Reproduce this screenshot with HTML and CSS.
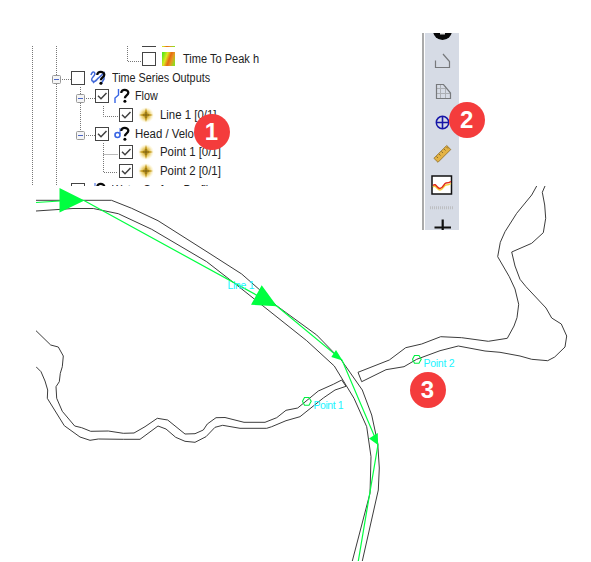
FILE: index.html
```html
<!DOCTYPE html>
<html lang="en">
<head>
<meta charset="utf-8">
<title>Time series outputs</title>
<link rel="stylesheet" href="styles.css">
</head>
<body>
<svg width="0" height="0" class="defs">
  <defs>
    <radialGradient id="glow"><stop offset="0" stop-color="#c49c20"/><stop offset=".55" stop-color="#ecd278" stop-opacity=".9"/><stop offset="1" stop-color="#fff3bf" stop-opacity="0"/></radialGradient>
    <linearGradient id="heat" x1="0" y1=".3" x2="1" y2=".7"><stop offset="0" stop-color="#5ee51b"/><stop offset=".3" stop-color="#dce820"/><stop offset=".55" stop-color="#e56a13"/><stop offset=".75" stop-color="#e79824"/><stop offset="1" stop-color="#91dc20"/></linearGradient>
    <symbol id="star" viewBox="0 0 16 16"><circle cx="8" cy="8" r="8" fill="url(#glow)"/><path d="M8 1 9.600 6.400 15 8 9.600 9.600 8 15 6.400 9.600 1 8 6.400 6.400Z" fill="#c39a20"/><path d="M8 5v6M5 8h6" stroke="#6b5410" stroke-width=".8"/></symbol>
    <symbol id="query" viewBox="0 0 16 16"><path d="M7.3 5C7 .9 14.300.9 14.300 4.800c0 2.600-3.400 2.600-3.400 5.400" fill="none" stroke="#080808" stroke-width="2.300"/><circle cx="10.900" cy="13.300" r="1.500"/></symbol>
    <symbol id="tick" viewBox="0 0 14 14"><path d="M3 6.700 6 9.700 11.500 4" fill="none" stroke="#404040" stroke-width="1.500"/></symbol>
  </defs>
</svg>
<main class="page">
  <section class="tree">
    <svg class="guides" viewBox="32 46 228 140" width="228" height="140">
      <path class="dots" d="M32.500 46V186M56.500 46V186M127.500 46V61.500H141M62 79.500H71M80.500 87V133M86 98.500H95M103.500 106V116.500H118M86 135.500H95M103.500 143V172.500H118M103.500 154.500H118"/>
      <g class="expander"><rect x="52.500" y="75.500" width="8" height="8" rx="1"/><rect x="76.500" y="94.500" width="8" height="8" rx="1"/><rect x="76.500" y="131.500" width="8" height="8" rx="1"/></g>
      <path d="M54 79.500h5M78 98.500h5M78 135.500h5" stroke="#4b66c7"/>
    </svg>
    <div class="rows">
      <div class="row d4"><i class="box"></i><svg class="ico"><rect x="1" y="1" width="13" height="14" fill="url(#heat)"/></svg></div>
      <div class="row d4"><i class="box"></i><svg class="ico"><rect x="1" y="1" width="13" height="14" fill="url(#heat)"/></svg><span class="label wide">Time To Peak h</span></div>
      <div class="row d1"><i class="box"></i><svg class="ico"><path d="M1 5C3-1 7 3 3 7S5 14 8 8M3 13 14 3v6l-3 5" fill="none" stroke="#4068d8" stroke-width="1.500"/><use href="#query" width="16" height="16"/></svg><span class="label">Time Series Outputs</span></div>
      <div class="row d2"><i class="box"><svg><use href="#tick"/></svg></i><svg class="ico"><path d="M1 15V10L4.500 7V1" fill="none" stroke="#3865e4" stroke-width="1.400"/><use href="#query" width="16" height="16"/></svg><span class="label">Flow</span></div>
      <div class="row d3"><i class="box"><svg><use href="#tick"/></svg></i><svg class="ico"><use href="#star" width="16" height="16"/></svg><span class="label count">Line 1 [0/1]</span></div>
      <div class="row d2"><i class="box"><svg><use href="#tick"/></svg></i><svg class="ico"><circle cx="3.500" cy="9" r="2.500" fill="none" stroke="#3865e4" stroke-width="1.600"/><path d="M6 2v6" stroke="#3865e4"/><use href="#query" width="16" height="16"/></svg><span class="label count">Head / Velo</span></div>
      <div class="row d3"><i class="box"><svg><use href="#tick"/></svg></i><svg class="ico"><use href="#star" width="16" height="16"/></svg><span class="label count">Point 1 [0/1]</span></div>
      <div class="row d3"><i class="box"><svg><use href="#tick"/></svg></i><svg class="ico"><use href="#star" width="16" height="16"/></svg><span class="label count">Point 2 [0/1]</span></div>
      <div class="row d1"><i class="box"></i><svg class="ico"><path d="M5 1v12" stroke="#3865e4"/><use href="#query" width="16" height="16"/></svg><span class="label">Water Surface Profiles</span></div>
    </div>
    <b class="badge one">1</b>
  </section>

  <aside class="toolbar">
    <svg viewBox="422 33 37 197" width="37" height="197" fill="none">
      <circle cx="442.500" cy="30.500" r="9.500" fill="#090909"/><path d="M440 33.500h5" stroke="#ddd" stroke-width="2"/>
      <path d="M435.500 60.500V67.500H449.500V61.500L443 54" stroke="#77797c" stroke-width="1.200"/>
      <path d="M440.500 84V98M445.500 86V98M436 88.500H447M436 93.500H450" stroke="#acafb4"/>
      <path d="M436.500 84.500H443.500L450.500 93V98.500H436.500Z" stroke="#77797c" stroke-width="1.200"/>
      <circle cx="442.500" cy="122.500" r="6.200" stroke="#1717a8" stroke-width="1.500"/><path d="M442.500 116V129M436 122.500H449" stroke="#1717a8" stroke-width="1.600"/>
      <path d="M446.700 145.500 450.800 149.500 438 162.300 433.900 158.300Z" fill="#e4b344" stroke="#8c6b25" stroke-width=".8"/><path d="M436.500 156.500l1.500 1.500M439 154l1.500 1.500M441.500 151.500l1.500 1.500M444 149l1.500 1.500M446.500 147l1.500 1.500" stroke="#65501f" stroke-width=".7"/>
      <rect x="432" y="176" width="19.500" height="18" fill="#fff" stroke="#111" stroke-width="1.500"/>
      <path d="M433 187C436 184 437 190 440 190S444 185 446 185 449 185 451 183.500" stroke="#f3d33a" stroke-width="1.500"/>
      <path d="M433 185.500C436 182.500 437 188.500 440 188.500S444 183 446 183 449 183 451 181.500" stroke="#e12a18" stroke-width="1.500"/>
      <path d="M430 207.700H454" stroke="#bdbfc2" stroke-width="3" stroke-dasharray="1 1"/>
      <path d="M442.700 219.500V230M434.500 227.500H451" stroke="#111" stroke-width="2.200"/>
    </svg>
    <b class="badge two">2</b>
  </aside>

  <section class="map">
    <svg viewBox="36 186 555 375" width="555" height="375">
      <g class="bank">
        <path d="M36 200.300H111.500L131.700 208.300 158 220.700 210 253.700 241.700 274 261 291 277 306 316.700 335 342 361 362.300 390 371.700 415 377.700 443 379.300 468 378.300 490 362.300 561"/>
        <path d="M36 211 73 208.500H93.300L118.300 213.700 151.700 229.300 206.700 261.700 236.700 285 306.700 340.700 334.300 366 354 398.300 366.700 426.700 371 456.700 370 493.300 352.300 561"/>
        <path d="M36 330.700 50.700 345 58.300 347 63.300 356 62.300 366.700 60.300 373.300 59.300 381.700 56 386.700 56.700 398.300 62.300 411.300 74.700 426 81.700 427.700 90.700 431.300 108.300 431 123.300 433.300 134 433 145 426.700 157.300 418.300 167.700 420 185 434 195 433.700 203.300 430 207.300 424 216 417.700 225 417.500 244 422.300 265 422.300 276.700 417.700 286 410.300 297.700 408 318.300 391 333.300 384.300 341.700 380 346 386.300 335 390 323.300 398 300 416.700 286 420.700 271.700 426.700 266.700 428.300H240L222.700 425.300 215 427.300 206 436.700 195 442.300 185 441.300 175.700 437.300 166 429 158 426 140 439.300 123.300 439.300 98.300 439 90 440.300 80 437 64.300 425.700 47.300 398.300 47.700 390 45 381 41 371.700 36 366.700"/>
        <path d="M536.700 186 531.700 195 516.700 213.300 505 231.700 500.300 242.300 497.700 256.700 509.300 276.700 515 289 518.700 304.300 517 317.700 514 326 507.300 338.300 488.300 341.300 461.700 337.700 440.700 336.700 421.700 344 405.700 347.700 389.300 360 358 372.300 361.700 381.700 386 369.700 404 366.700 416.700 359.300 440 350.700 458.300 346 485 351 500 352.300 520 356 531.700 359.300 547.700 360.700 554.700 357 565 347 566.700 336 561.300 324 551.700 318 546 308 526 286.700 520 279.300 515 266 511.700 252 531.700 243.300 543.300 232.700 545.700 218.300 544.700 205 542.300 192.300 545 186"/>
      </g>
      <path class="flow" d="M36 202.500 60 201M84 200.500 277 306.300 342 360 378 444.500 358.300 561"/>
      <path class="arrows" d="M59.500 188V212.500L84.500 200.500ZM261.700 285.300 251 304.700 277 306.300ZM336 350 331.300 357 342.500 360.500ZM377.800 433 369 438.500 378 445Z"/>
      <path class="node" d="M302.500 401.300 304.500 397.500H309L311.200 401.300 309 405.300H304.500ZM412.500 359.300 414.500 355.500H419L421.200 359.300 419 363.300H414.500Z"/>
      <g class="names"><text x="227.500" y="289" textLength="27">Line 1</text><text x="313.500" y="409" textLength="30">Point 1</text><text x="423.500" y="367" textLength="31">Point 2</text></g>
    </svg>
    <b class="badge three">3</b>
  </section>
</main>
</body>
</html>
```
FILE: styles.css
```css
body { margin: 0; background: #fff; font-family: "Liberation Sans", sans-serif; }
.defs { position: absolute; }
.page {
  display: grid;
  grid-template-columns: 32px 4px 224px 162px 37px 1fr;
  grid-template-rows: 33px 13px 140px 44px 331px;
  width: 591px;
  height: 562px;
  overflow: hidden;
}
svg { display: block; }
.tree { grid-area: 3 / 2 / 4 / 4; position: relative; }
.rows { height: 140px; overflow: hidden; }
.rows::before { content: ""; display: block; margin-top: -15px; }
.guides { position: absolute; inset: 0; }
.dots { fill: none; stroke: #777; stroke-dasharray: 1 1; }
.expander { fill: #f5f5f5; stroke: #999; }
.row { display: flex; align-items: center; height: 18.67px; font-size: 12px; white-space: nowrap; }
.d1 { padding-left: 39px; }
.d2 { padding-left: 63px; }
.d3 { padding-left: 87px; }
.d4 { padding-left: 110px; }
.box { box-sizing: border-box; flex: none; width: 14px; height: 14px; border: 1.5px solid #444; background: #fff; }
.box svg { width: 14px; height: 14px; margin: -1px; }
.ico { flex: none; width: 16px; height: 16px; margin: 0 5px; }
.d3 .ico, .d1 .ico { margin-right: 5.5px; }
.label { color: #222; transform: scaleX(.9); transform-origin: left; }
.wide { transform: translateX(1px) scaleX(.92); }
.count { transform: scaleX(.95); }
.toolbar {
  grid-area: 2 / 5 / 5 / 6;
  position: relative;
  z-index: 2;
  background: linear-gradient(90deg, #aaa 0 2px, #fff 2px 3px, #d6dbe5 3px);
}
.map { grid-area: 4 / 3 / 6 / 7; position: relative; }
.bank { fill: none; stroke: #3c3c3c; stroke-width: 1; }
.flow { fill: none; stroke: #00ff40; stroke-width: 1.2; }
.arrows { fill: #00ff40; }
.node { fill: none; stroke: #00f040; stroke-width: 1.1; }
.names { fill: #20f4ff; font-size: 10.5px; }
.badge {
  position: absolute;
  z-index: 3;
  width: 36px;
  height: 36px;
  border-radius: 50%;
  background: #f43c3c;
  color: #fff;
  font: bold 24px/36px "Liberation Sans", sans-serif;
  text-align: center;
}
.one { left: 161.5px; top: 68px; }
.two { left: 26.7px; top: 68.5px; }
.three { left: 373.5px; top: 185.5px; }
```
